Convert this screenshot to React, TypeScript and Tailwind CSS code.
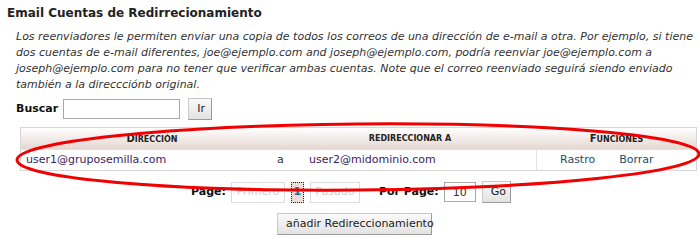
import React from 'react';

const font = { fontFamily: '"DejaVu Sans", Verdana, sans-serif' };

function GrayButton({ children, className = '' }: { children: React.ReactNode; className?: string }) {
  return (
    <button
      className={`h-[22px] whitespace-nowrap border border-[#c8c8c8] border-b-[#9a9a9a] border-r-[#9a9a9a] bg-gradient-to-b from-[#fafafa] to-[#e2e2e2] px-[8px] text-[11px] leading-[20px] text-[#222] ${className}`}
    >
      {children}
    </button>
  );
}

export default function App() {
  return (
    <div className="relative h-[239px] w-[700px] overflow-hidden bg-white text-[#333]" style={font}>
      <h2 className="pl-[7px] pt-[5px] text-[12px] font-bold leading-[16px] text-[#222]">
        Email Cuentas de Redirrecionamiento
      </h2>

      <p className="mt-[8px] pl-[16px] text-[11px] italic leading-[16px] text-[#333] whitespace-nowrap">
        Los reenviadores le permiten enviar una copia de todos los correos de una dirección de e-mail a otra. Por ejemplo, si tiene
        <br />
        dos cuentas de e-mail diferentes, joe@ejemplo.com and joseph@ejemplo.com, podría reenviar joe@ejemplo.com a
        <br />
        joseph@ejemplo.com para no tener que verificar ambas cuentas. Note que el correo reenviado seguirá siendo enviado
        <br />
        también a la direccciónb original.
      </p>

      <div className="mt-[5px] flex items-center pl-[16px]">
        <span className="text-[11px] font-bold text-[#111]">Buscar</span>
        <input className="ml-[5px] h-[20px] w-[117px] border border-[#a8a8a8] bg-white" />
        <GrayButton className="ml-[8px] w-[24px] px-0">Ir</GrayButton>
      </div>

      <div className="ml-[20px] mt-[7px] w-[677px] border border-[#d6d6d6]">
        <div className="flex h-[21px] items-center bg-gradient-to-b from-white to-[#e5d7d1] text-[8px] font-bold uppercase text-[#222]">
          <div className="w-[262px] text-center">
            <span className="text-[10px]">D</span>irección
          </div>
          <div className="w-[254px] text-center">redireccionar a</div>
          <div className="flex-1 text-center">
            <span className="text-[10px]">F</span>unciones
          </div>
        </div>
        <div className="flex h-[21px] items-center border-t border-[#e2e2e2] text-[11px]">
          <div className="w-[256px] pl-[5px] text-[#3b1d5c]">user1@gruposemilla.com</div>
          <div className="w-[32px] text-[#333]">a</div>
          <div className="w-[227px] text-[#3b1d5c]">user2@midominio.com</div>
          <div className="flex h-full flex-1 items-center border-l border-[#e2e2e2] pl-[23px] text-[#1f4d6e]">
            <span>Rastro</span>
            <span className="ml-[24px]">Borrar</span>
          </div>
        </div>
      </div>

      <div className="mt-[10px] flex items-center pl-[191px] text-[11px]">
        <span className="font-bold text-[#111]">Page:</span>
        <span className="ml-[5px] flex h-[21px] w-[54px] items-center justify-center border border-[#dcdcdc] text-[#d0d0d0]">
          Primero
        </span>
        <span className="ml-[6px] flex h-[21px] w-[13px] items-center justify-center border border-dotted border-[#222] bg-[#eadcd6] font-bold text-[#1f6e8a]">
          1
        </span>
        <span className="ml-[6px] flex h-[21px] w-[50px] items-center justify-center border border-[#dcdcdc] text-[#d0d0d0]">
          Pasado
        </span>
        <span className="ml-[19px] font-bold text-[#111]">Por Page:</span>
        <input
          className="ml-[5px] h-[20px] w-[32px] border border-[#a8a8a8] text-center text-[11px]"
          defaultValue="10"
        />
        <GrayButton className="ml-[6px] w-[29px] px-0">Go</GrayButton>
      </div>

      <div className="mt-[10px] flex pl-[277px]">
        <GrayButton className="w-[155px] px-0">añadir Redireccionamiento</GrayButton>
      </div>

      <svg className="pointer-events-none absolute left-0 top-0" width="700" height="239">
        <ellipse
          cx="358"
          cy="157"
          rx="341"
          ry="33"
          transform="rotate(-0.5 358 157)"
          fill="none"
          stroke="#f00000"
          strokeWidth="3"
        />
      </svg>
    </div>
  );
}
